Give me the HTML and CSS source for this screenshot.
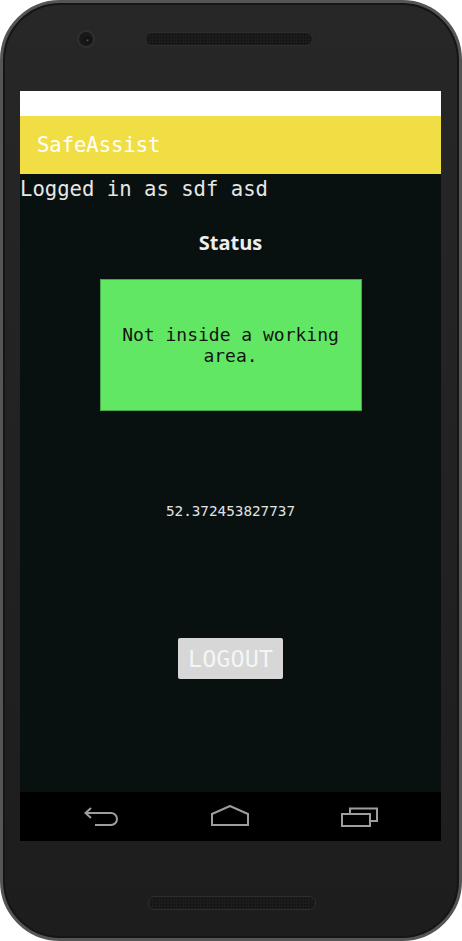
FILE: index.html
```html
<!DOCTYPE html>
<html lang="en">

<head>
    <meta charset="UTF-8">
    <meta name="viewport" content="width=device-width, initial-scale=1.0">
    <title>SafeAssist</title>
    <link rel="stylesheet" href="styles.css">
</head>

<body>
    <div class="phone">
        <div class="phone-top">
            <div class="camera"></div>
            <div class="speaker"></div>
        </div>

        <div class="screen">
            <div class="status-bar"></div>
            <div class="toolbar">SafeAssist</div>

            <div class="content">
                <div class="logged-in">Logged in as sdf asd</div>
                <div class="status-title">Status</div>
                <div class="status-box">Not inside a working area.</div>
                <div class="coordinate">52.372453827737</div>
                <button class="logout-button">LOGOUT</button>
            </div>

            <div class="nav-bar">
                <svg class="nav-back" width="35" height="20" viewBox="0 0 35 20">
                    <path d="M7 1 L1.5 6 L7 11 M1.5 6 H27 A6 6 0 0 1 27 18 H11" />
                </svg>
                <svg class="nav-home" width="38" height="21" viewBox="0 0 38 21">
                    <path d="M1 20 V9 L19 1 L37 9 V20 Z" />
                </svg>
                <svg class="nav-recent" width="38" height="20" viewBox="0 0 38 20">
                    <path d="M1 7 H29 V19 H1 Z M9 7 V1.5 H36 V14 H29" />
                </svg>
            </div>
        </div>

        <div class="phone-bottom">
            <div class="speaker"></div>
        </div>
    </div>
</body>

</html>
```

FILE: styles.css
```css
body {
    margin: 0;
    background-color: #ffffff;
    font-family: "DejaVu Sans Mono", monospace;
}

.phone {
    width: 462px;
    height: 941px;
    box-sizing: border-box;
    border-radius: 60px;
    border: 3px solid #555555;
    box-shadow: inset 0 0 0 2px #151515;
    background: linear-gradient(#272727, #1d1d1d);
    display: flex;
    flex-direction: column;
}

.phone-top {
    height: 88px;
    box-sizing: border-box;
    padding: 27px 0 0 74px;
    display: flex;
    align-items: flex-start;
    gap: 50px;
}

.camera {
    width: 14px;
    height: 14px;
    border-radius: 50%;
    background: radial-gradient(circle at 60% 60%, #6a4048 0, #111 2px, #181818 5px);
    border: 2px solid #303030;
}

.speaker {
    width: 168px;
    height: 14px;
    box-sizing: border-box;
    border-radius: 7px;
    border: 1px solid #2e2e2e;
    background-color: #1b1b1b;
    background-image: radial-gradient(#0b0b0b 0.8px, transparent 1px);
    background-size: 3px 3px;
    background-position: 1px 0;
}

.phone-top .speaker {
    margin-top: 2px;
}

.screen {
    width: 421px;
    height: 750px;
    margin-left: 17px;
    display: flex;
    flex-direction: column;
}

.status-bar {
    height: 25px;
    background-color: #ffffff;
}

.toolbar {
    height: 58px;
    background-color: #f1de45;
    color: #ffffff;
    font-size: 20.5px;
    padding-left: 17px;
    display: flex;
    align-items: center;
}

.content {
    flex: 1;
    background-color: #091010;
    display: flex;
    flex-direction: column;
    align-items: center;
}

.logged-in {
    align-self: stretch;
    margin-top: 3px;
    font-size: 20.6px;
    line-height: 24px;
    color: #e6e6e6;
}

.status-title {
    margin-top: 28px;
    font-family: "Open Sans", sans-serif;
    font-weight: bold;
    font-size: 20px;
    line-height: 28px;
    color: #eeeeee;
}

.status-box {
    margin-top: 22px;
    width: 262px;
    height: 132px;
    box-sizing: border-box;
    padding: 0 18px;
    background-color: #62e764;
    border: 1px solid #46a848;
    color: #141414;
    font-size: 18px;
    line-height: 21px;
    text-align: center;
    display: flex;
    align-items: center;
    justify-content: center;
}

.coordinate {
    margin-top: 92px;
    font-size: 14.3px;
    line-height: 17px;
    color: #e2e2e2;
}

.logout-button {
    margin-top: 118px;
    width: 105px;
    height: 41px;
    padding: 0;
    border: none;
    border-radius: 2px;
    background-color: #d6d7d6;
    color: #f5f5f5;
    font-family: "DejaVu Sans Mono", monospace;
    font-size: 23.5px;
}

.nav-bar {
    height: 49px;
    background-color: #000000;
    display: flex;
    align-items: center;
    padding-left: 64px;
    gap: 92px;
}

.nav-bar svg {
    fill: none;
    stroke: #9e9e9e;
    stroke-width: 2;
}

.nav-home {
    margin-top: -2px;
}

.phone-bottom {
    flex: 1;
    display: flex;
    justify-content: center;
    padding-top: 55px;
    padding-left: 1px;
}
```
